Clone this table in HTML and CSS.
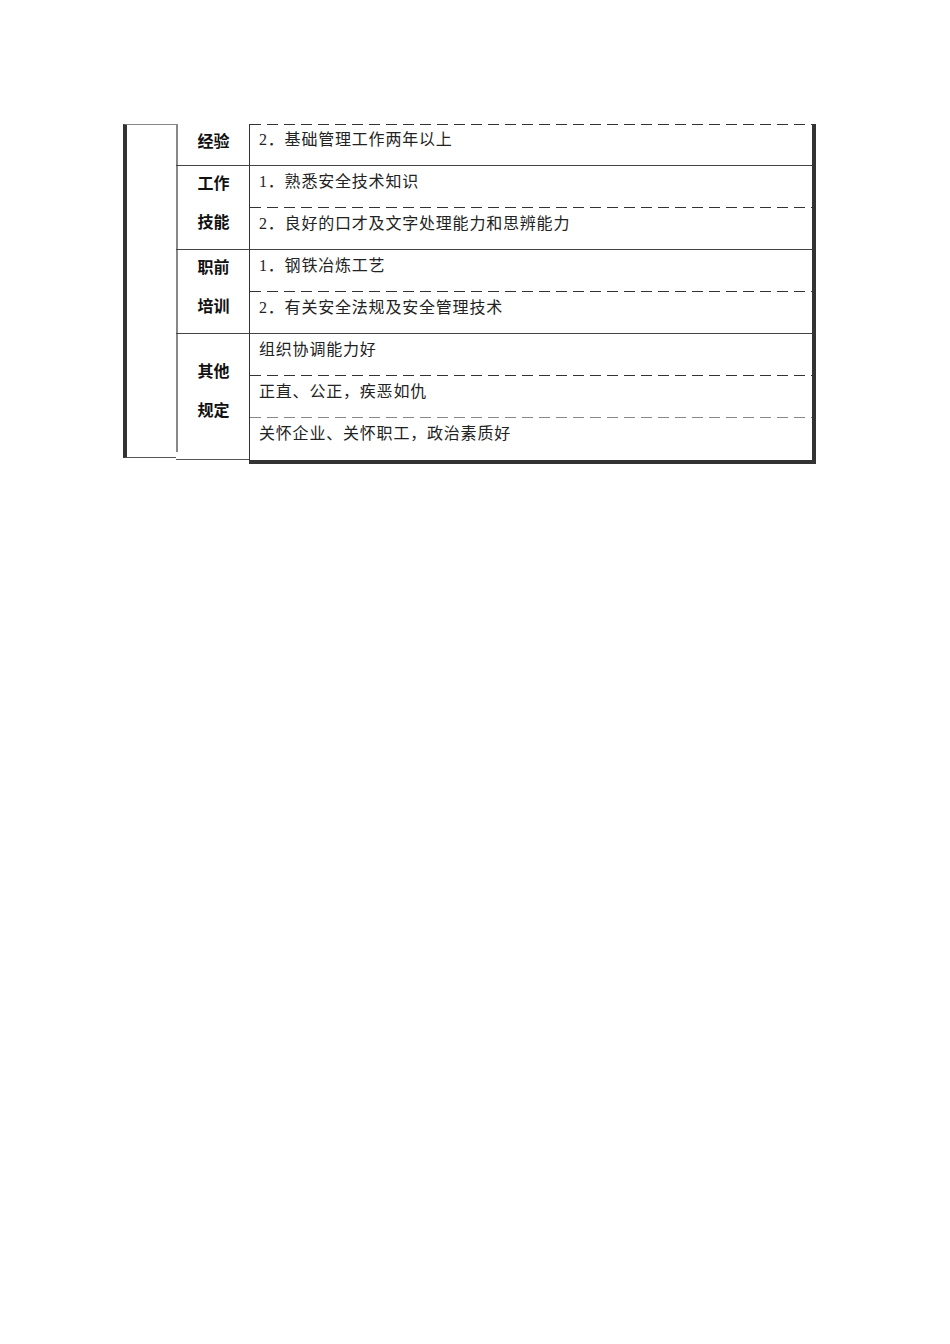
FILE: index.html
```html
<!DOCTYPE html>
<html lang="zh">
<head>
<meta charset="utf-8">
<title>岗位要求</title>
<link rel="stylesheet" href="styles.css">
</head>
<body>
<div class="sheet">
  <div class="lead"></div>
  <div class="groups">
    <div class="group g1">
      <div class="label"><div>经验</div></div>
      <div class="content">
        <div class="line">2．基础管理工作两年以上</div>
      </div>
    </div>
    <div class="group g2">
      <div class="label"><div>工作</div><div>技能</div></div>
      <div class="content">
        <div class="line">1．熟悉安全技术知识</div>
        <div class="dash"></div>
        <div class="line">2．良好的口才及文字处理能力和思辨能力</div>
      </div>
    </div>
    <div class="group g3">
      <div class="label"><div>职前</div><div>培训</div></div>
      <div class="content">
        <div class="line">1．钢铁冶炼工艺</div>
        <div class="dash"></div>
        <div class="line">2．有关安全法规及安全管理技术</div>
      </div>
    </div>
    <div class="group g4">
      <div class="label"><div>其他</div><div>规定</div></div>
      <div class="content">
        <div class="line">组织协调能力好</div>
        <div class="dash"></div>
        <div class="line">正直、公正，疾恶如仇</div>
        <div class="dash light"></div>
        <div class="line">关怀企业、关怀职工，政治素质好</div>
      </div>
    </div>
  </div>
</div>
</body>
</html>
```
FILE: styles.css
```css
html, body {
  margin: 0;
  padding: 0;
  background: #fff;
}

body {
  width: 950px;
  height: 1344px;
  font-family: "Liberation Serif", "Noto Sans CJK SC", serif;
  color: #222;
}

.sheet {
  display: flex;
  margin: 124px 0 0 123px;
  width: 693px;
}

.lead {
  width: 49px;
  height: 332px;
  border-left: 4px solid #333;
  border-top: 1px solid #888;
  border-bottom: 1px solid #555;
  flex: none;
}

.groups {
  display: flex;
  flex-direction: column;
  width: 640px;
  border-right: 4px solid #333;
}

.group {
  display: flex;
}

.label {
  width: 73px;
  flex: none;
  background: linear-gradient(#888, #888) left top / 2px 100% no-repeat;
  font-family: "Noto Sans CJK SC", sans-serif;
  font-weight: 700;
  font-size: 16px;
  line-height: 20px;
  text-align: center;
  padding-left: 2px;
  color: #111;
  display: flex;
  flex-direction: column;
  gap: 19px;
  padding-top: 6px;
  box-sizing: border-box;
}

.g4 .label {
  padding-top: 26px;
  margin-bottom: 4px;
  border-bottom: 1px solid #555;
  background: linear-gradient(#888, #888) left top / 2px calc(100% - 7px) no-repeat;
}

.content {
  flex: 1;
  border-left: 1px solid #333;
  display: flex;
  flex-direction: column;
}

.group + .group .content {
  border-top: 1px solid #444;
}

.g2 .label, .g3 .label, .g4 .label {
  border-top: 1px solid #444;
}

.g1 .content {
  background: repeating-linear-gradient(to right, #333 0 11px, transparent 11px 17px) top left / 100% 1px no-repeat;
}

.line {
  height: 41px;
  box-sizing: border-box;
  padding: 6px 0 0 9px;
  font-size: 16px;
  line-height: 20px;
  letter-spacing: 0.8px;
  white-space: nowrap;
}

.dash {
  height: 1px;
  background: repeating-linear-gradient(to right, #333 0 11px, transparent 11px 17px);
}

.dash.light {
  background: repeating-linear-gradient(to right, #888 0 11px, transparent 11px 17px);
}

.g4 .content {
  border-bottom: 4px solid #333;
}

.g4 .line:last-child {
  height: 42px;
}
```
